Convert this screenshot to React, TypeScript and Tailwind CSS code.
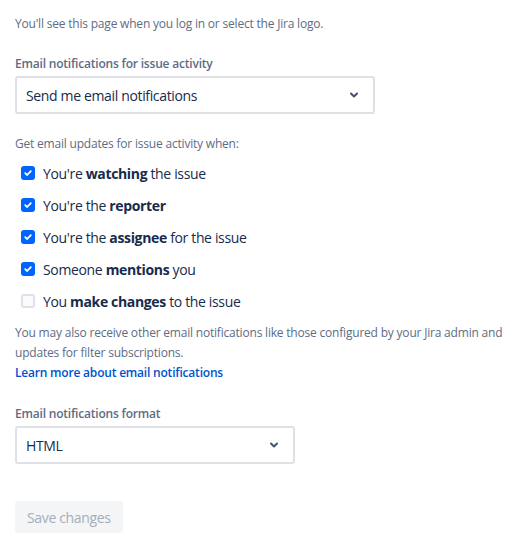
import { useState } from 'react';

const options = [
    { pre: "You're ", bold: 'watching', post: ' the issue', checked: true },
    { pre: "You're the ", bold: 'reporter', post: '', checked: true },
    { pre: "You're the ", bold: 'assignee', post: ' for the issue', checked: true },
    { pre: 'Someone ', bold: 'mentions', post: ' you', checked: true },
    { pre: 'You ', bold: 'make changes', post: ' to the issue', checked: false },
];

function Chevron() {
    return (
        <svg width="10" height="10" viewBox="0 0 10 10" className="text-[#42526e]">
            <path d="M2 3.5 L5 6.5 L8 3.5" fill="none" stroke="currentColor" strokeWidth="2" strokeLinecap="round" strokeLinejoin="round" />
        </svg>
    );
}

function SelectBox({ value, width }: { value: string; width: string }) {
    return (
        <div className={`${width} h-[38px] flex items-center justify-between pl-[9px] pr-[14px] bg-white border-2 border-[#dfe1e6] rounded-[3px] text-[14px] tracking-[-0.35px] text-[#172b4d]`}>
            <span>{value}</span>
            <Chevron />
        </div>
    );
}

function Checkbox({ checked }: { checked: boolean }) {
    return checked ? (
        <span className="w-[14px] h-[14px] rounded-[3px] bg-[#0065ff] flex items-center justify-center">
            <svg width="10" height="10" viewBox="0 0 10 10">
                <path d="M2.2 5.1 L4.2 7 L7.8 3.1" fill="none" stroke="white" strokeWidth="1.8" strokeLinecap="round" strokeLinejoin="round" />
            </svg>
        </span>
    ) : (
        <span className="w-[14px] h-[14px] rounded-[3px] bg-[#fafbfc] border-2 border-[#dfe1e6]" />
    );
}

export default function App() {
    const [items] = useState(options);

    return (
        <div className="w-[524px] h-[541px] bg-white px-[15px] pt-[14px] font-['Segoe_UI','Open_Sans',sans-serif] text-[#172b4d]">
            <p className="text-[12px] leading-[20px] tracking-[-0.2px] text-[#5e6c84]">You'll see this page when you log in or select the Jira logo.</p>

            <div className="mt-[22px]">
                <label className="block text-[12px] leading-[16px] tracking-[-0.2px] font-semibold text-[#5e6c84] mb-[4px]">Email notifications for issue activity</label>
                <SelectBox value="Send me email notifications" width="w-[360px]" />
            </div>

            <p className="mt-[20px] text-[12px] leading-[20px] tracking-[-0.2px] text-[#5e6c84]">Get email updates for issue activity when:</p>

            <div className="mt-[3px] flex flex-col">
                {items.map((o) => (
                    <div key={o.bold} className="h-[32px] flex items-center gap-[8px] pl-[6px] text-[14px] tracking-[-0.35px]">
                        <Checkbox checked={o.checked} />
                        <span>
                            {o.pre}
                            <strong className="font-bold">{o.bold}</strong>
                            {o.post}
                        </span>
                    </div>
                ))}
            </div>

            <p className="mt-[6px] text-[12px] leading-[20px] tracking-[-0.2px] text-[#5e6c84]">
                You may also receive other email notifications like those configured by your Jira admin and updates for filter subscriptions.
            </p>
            <a className="block text-[12px] leading-[20px] tracking-[-0.2px] font-semibold text-[#0052cc]">Learn more about email notifications</a>

            <div className="mt-[23px]">
                <label className="block text-[12px] leading-[16px] tracking-[-0.2px] font-semibold text-[#5e6c84] mb-[4px]">Email notifications format</label>
                <SelectBox value="HTML" width="w-[280px]" />
            </div>

            <button disabled className="mt-[37px] h-[32px] px-[12px] rounded-[3px] bg-[#f4f5f7] text-[14px] tracking-[-0.35px] text-[#a5adba]">
                Save changes
            </button>
        </div>
    );
}
